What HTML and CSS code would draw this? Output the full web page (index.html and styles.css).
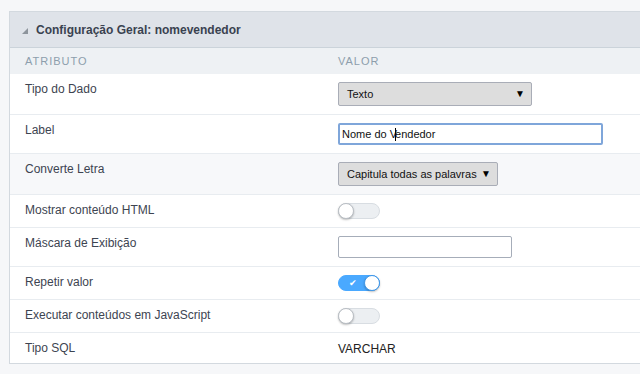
FILE: index.html
```html
<!DOCTYPE html>
<html lang="pt-BR">
<head>
  <meta charset="UTF-8">
  <meta name="viewport" content="width=device-width, initial-scale=1.0">
  <link rel="stylesheet" href="styles.css">
  <title>Configuração Geral</title>
</head>
<body>
  <div class="panel">
    <div class="panel__header">
      <span class="panel__arrow"></span>
      <span class="panel__title">Configuração Geral: nomevendedor</span>
    </div>

    <div class="row row--head">
      <div class="cell cell--label">Atributo</div>
      <div class="cell cell--value">Valor</div>
    </div>

    <div class="row">
      <div class="cell cell--label">Tipo do Dado</div>
      <div class="cell cell--value">
        <div class="select select--wide"><span>Texto</span><span class="select__arrow">&#9660;</span></div>
      </div>
    </div>

    <div class="row">
      <div class="cell cell--label">Label</div>
      <div class="cell cell--value">
        <div class="field field--long field--focus">Nome do V<span class="caret"></span>endedor</div>
      </div>
    </div>

    <div class="row row--hover">
      <div class="cell cell--label">Converte Letra</div>
      <div class="cell cell--value">
        <div class="select select--short"><span>Capitula todas as palavras</span><span class="select__arrow">&#9660;</span></div>
      </div>
    </div>

    <div class="row">
      <div class="cell cell--label">Mostrar conteúdo HTML</div>
      <div class="cell cell--value">
        <div class="toggle"><span class="toggle__knob"></span></div>
      </div>
    </div>

    <div class="row">
      <div class="cell cell--label">Máscara de Exibição</div>
      <div class="cell cell--value">
        <div class="field field--mid"></div>
      </div>
    </div>

    <div class="row">
      <div class="cell cell--label">Repetir valor</div>
      <div class="cell cell--value">
        <div class="toggle toggle--on"><span class="toggle__check">&#10004;</span><span class="toggle__knob"></span></div>
      </div>
    </div>

    <div class="row">
      <div class="cell cell--label">Executar conteúdos em JavaScript</div>
      <div class="cell cell--value">
        <div class="toggle"><span class="toggle__knob"></span></div>
      </div>
    </div>

    <div class="row row--last">
      <div class="cell cell--label">Tipo SQL</div>
      <div class="cell cell--value cell--text">VARCHAR</div>
    </div>
  </div>
</body>
</html>
```

FILE: styles.css
```css
html, body {
  margin: 0;
  padding: 0;
}

body {
  background: #f6f7f9;
  font-family: "Liberation Sans", Arial, sans-serif;
  font-size: 12px;
  color: #3d4451;
  padding: 11px 0 0 9px;
  overflow: hidden;
}

.panel {
  background: #fff;
  border: 1px solid #d3d9df;
  border-right: 0;
}

.panel__header {
  display: flex;
  align-items: center;
  height: 35px;
  background: #dfe3e9;
  border-bottom: 1px solid #cbd3da;
  padding-left: 12px;
}

.panel__arrow {
  width: 0;
  height: 0;
  border-left: 6px solid transparent;
  border-bottom: 6px solid #8d949c;
  margin: 2px 8px 0 0;
}

.panel__title {
  font-weight: bold;
  font-size: 12px;
  color: #3a4250;
}

.row {
  display: grid;
  grid-template-columns: 312px 1fr;
  border-bottom: 1px solid #e8ecf0;
}

.row--head {
  background: #eef1f4;
  border-bottom: 0;
}

.row--head .cell {
  padding: 7px 0 6px 15px;
  height: 13px;
  line-height: 13px;
  font-size: 11px;
  letter-spacing: 1px;
  text-transform: uppercase;
  color: #8d9eac;
}

.row--head .cell--value {
  padding-left: 16px;
}

.row--hover {
  background: #f7f8fa;
}

.row--last {
  border-bottom: 0;
}

.cell {
  line-height: 14px;
}

.cell--label {
  padding: 8px 15px;
}

.cell--value {
  padding: 8px 16px;
}

.cell--text {
  padding-top: 9px;
  padding-bottom: 7px;
  font-size: 12px;
  color: #222;
}

/* selects */
.select {
  display: flex;
  align-items: center;
  justify-content: space-between;
  box-sizing: border-box;
  height: 24px;
  padding: 0 8px;
  background: #dddddd;
  border: 1px solid #a9adb7;
  border-radius: 2px;
  color: #111;
  font-size: 11px;
  white-space: nowrap;
}

.select--wide {
  width: 194px;
}

.select--short {
  width: 160px;
}

.select__arrow {
  font-size: 10px;
  margin-right: -2px;
  color: #000;
}

/* text fields */
.field {
  box-sizing: border-box;
  height: 22px;
  border: 1px solid #a6adb9;
  border-radius: 2px;
  background: #fff;
  padding: 0 3px;
  line-height: 20px;
  color: #111;
  font-size: 11px;
}

.field--long {
  width: 265px;
}

.field--mid {
  width: 174px;
}

.field--focus {
  border: 2px solid #7fa6da;
  line-height: 18px;
  padding: 0 2px;
}

.caret {
  display: inline-block;
  width: 1px;
  height: 13px;
  background: #000;
  vertical-align: -3px;
  margin: 0 -1px 0 -2px;
}

/* toggles */
.toggle {
  position: relative;
  box-sizing: border-box;
  width: 42px;
  height: 16px;
  border-radius: 8px;
  background: #eceff2;
  border: 1px solid #d8dde2;
}

.toggle__knob {
  position: absolute;
  top: -1px;
  left: -1px;
  box-sizing: border-box;
  width: 16px;
  height: 16px;
  border-radius: 50%;
  background: #fff;
  border: 1px solid #b9bec4;
  box-shadow: 0 1px 2px rgba(0,0,0,.25);
}

.toggle--on {
  background: #4aa9ff;
  border-color: #4aa9ff;
}

.toggle--on .toggle__knob {
  left: auto;
  right: -1px;
  border-color: #3d97ea;
}

.toggle__check {
  position: absolute;
  left: 10px;
  top: 0;
  line-height: 14px;
  font-size: 9px;
  color: #fff;
}
```
